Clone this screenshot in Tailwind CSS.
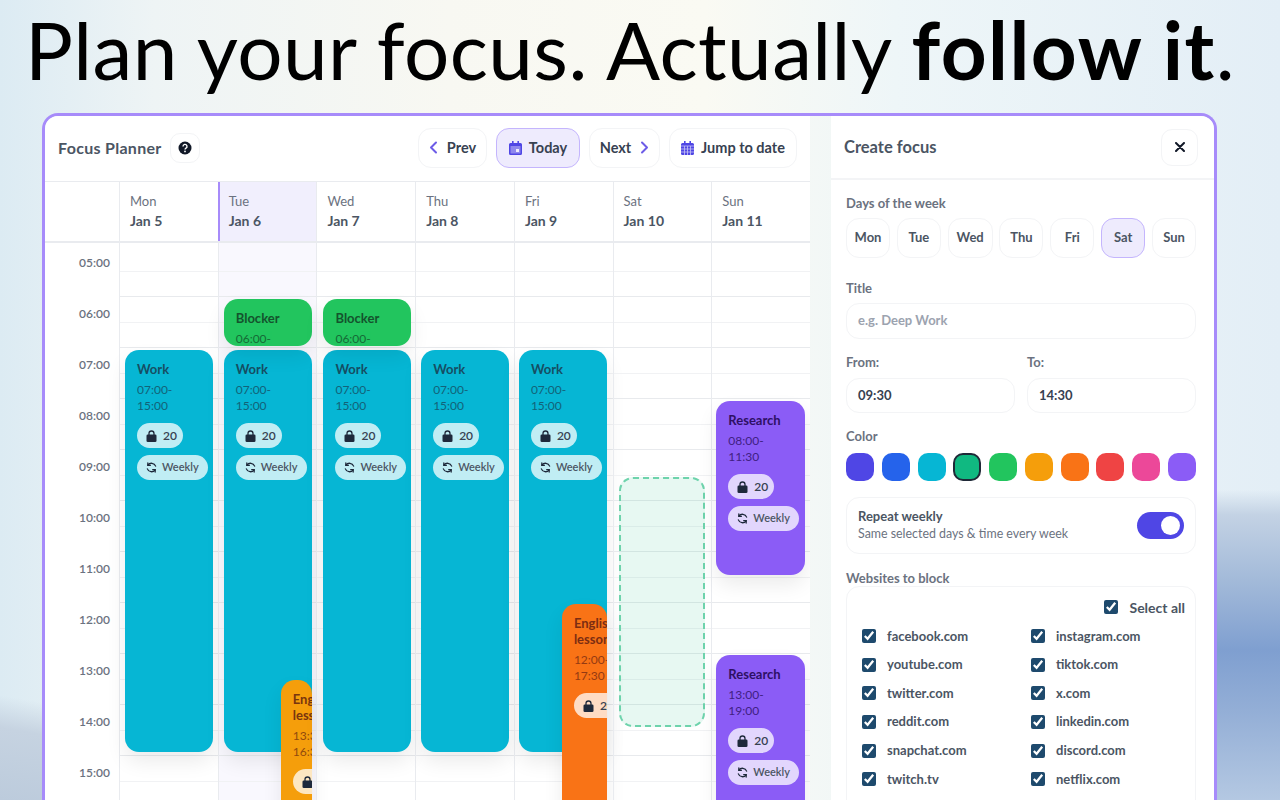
<!DOCTYPE html>
<html lang="en">
<head>
<meta charset="UTF-8" />
<title>Focus Planner</title>
<script src="https://cdn.jsdelivr.net/npm/@tailwindcss/browser@4"></script>
</head>
<body class="relative w-[1280px] h-[800px] overflow-hidden font-['Lato',sans-serif] text-[#1f2937] bg-no-repeat bg-[size:63px_100%,42px_100%,100%_100%] bg-[position:right_top,left_top,left_top] bg-[image:linear-gradient(180deg,transparent_490px,#c3d2e4_515px,#a3bad9_580px,#7f9fd0_650px,#93aed6_710px,#b4c8e2_800px),linear-gradient(190deg,transparent_87%,#c6d3e1_91%,#bccbdc_100%),linear-gradient(90deg,#dcebf3_0%,#eef4f5_12%,#f8f8f2_35%,#fafaf3_55%,#eef6f8_70%,#e3eef6_100%)]">

  <h1 class="h-[113px] pt-[3px] pl-[25px] whitespace-nowrap text-[80px] leading-[92px] text-black font-['Lato',sans-serif] font-normal tracking-[0.42px]">Plan your focus. Actually <b class="font-bold tracking-[1.5px]">follow it</b>.</h1>

  <div class="ml-[42px] w-[1175px] h-[720px] border-[3px] border-b-0 border-[#a78bfa] rounded-t-[16px] flex">

    <!-- calendario -->
    <section class="w-[765px] bg-white rounded-tl-[13px] shrink-0 flex flex-col">
      <header class="h-[65px] flex items-center justify-between pl-[13px] pr-[13px] pb-[2px]">
        <div class="flex items-center gap-2">
          <span class="text-[16px] font-bold text-[#4b5563] tracking-[0.3px]">Focus Planner</span>
          <span class="w-[30px] h-[30px] rounded-[10px] border border-gray-100 flex items-center justify-center">
            <svg width="14" height="14" viewBox="0 0 14 14"><circle cx="7" cy="7" r="6.5" fill="#111827"/><path d="M5 5.4a2 2 0 1 1 3 1.700c-.7.4-1 .7-1 1.400" fill="none" stroke="#fff" stroke-width="1.400"/><circle cx="7" cy="10.400" r=".9" fill="#fff"/></svg>
          </span>
        </div>
        <div class="flex items-center gap-[9px] text-[14.5px] font-bold text-[#374151]">
          <button class="h-[40px] w-[69px] rounded-[13px] border border-gray-100 flex items-center justify-center gap-[9px]">
            <svg width="9" height="13" viewBox="0 0 9 13" fill="none" stroke="#6d5ce7" stroke-width="2" stroke-linecap="round" stroke-linejoin="round"><path d="M7 1.500 2 6.500l5 5"/></svg>Prev
          </button>
          <button class="h-[40px] w-[84px] rounded-[13px] border border-[#c4b5fd] bg-[#eeebfd] flex items-center justify-center gap-[7px]">
            <svg width="13" height="14" viewBox="0 0 13 14"><path d="M3 0h1.600v2h3.800V0H10v2h1.500A1.500 1.500 0 0 1 13 3.500v9a1.500 1.500 0 0 1-1.500 1.500h-10A1.500 1.500 0 0 1 0 12.500v-9A1.500 1.500 0 0 1 1.500 2H3z" fill="#4f46e5"/><rect x="1.500" y="5" width="10" height="7.500" rx=".5" fill="#8f88ee"/><rect x="7" y="8" width="3" height="3" fill="#eeebfd"/></svg>Today
          </button>
          <button class="h-[40px] w-[71px] rounded-[13px] border border-gray-100 flex items-center justify-center gap-[9px]">
            Next<svg width="9" height="13" viewBox="0 0 9 13" fill="none" stroke="#6d5ce7" stroke-width="2" stroke-linecap="round" stroke-linejoin="round"><path d="m2 1.500 5 5-5 5"/></svg>
          </button>
          <button class="h-[40px] w-[128px] rounded-[13px] border border-gray-100 flex items-center justify-center gap-[7px]">
            <svg width="13" height="14" viewBox="0 0 13 14"><path d="M3 0h1.600v2h3.800V0H10v2h1.500A1.500 1.500 0 0 1 13 3.500v9a1.500 1.500 0 0 1-1.500 1.500h-10A1.500 1.500 0 0 1 0 12.500v-9A1.500 1.500 0 0 1 1.500 2H3z" fill="#4f46e5"/><path d="M0 5h13M0 8h13M0 11h13M3.500 5v9M6.500 5v9M9.500 5v9" stroke="#c7c3f5" stroke-width=".8"/></svg>Jump to date
          </button>
        </div>
      </header>

      <!-- cabecera de dias -->
      <div class="h-[62px] flex border-t border-b-2 border-[#e9ebef] shrink-0">
        <div class="w-[74px] shrink-0"></div>
        <div class="flex-1 border-l border-[#e9ebef] pl-[10px] pt-[9px] text-[13px] leading-[20px]"><div class="text-[#6b7280]">Mon</div><div class="text-[14px] font-bold text-[#4b5563]">Jan 5</div></div>
        <div class="flex-1 border-l-2 border-[#a78bfa] bg-[#f1effd] pl-[9px] pt-[9px] text-[13px] leading-[20px]"><div class="text-[#6b7280]">Tue</div><div class="text-[14px] font-bold text-[#4b5563]">Jan 6</div></div>
        <div class="flex-1 border-l border-[#e9ebef] pl-[10px] pt-[9px] text-[13px] leading-[20px]"><div class="text-[#6b7280]">Wed</div><div class="text-[14px] font-bold text-[#4b5563]">Jan 7</div></div>
        <div class="flex-1 border-l border-[#e9ebef] pl-[10px] pt-[9px] text-[13px] leading-[20px]"><div class="text-[#6b7280]">Thu</div><div class="text-[14px] font-bold text-[#4b5563]">Jan 8</div></div>
        <div class="flex-1 border-l border-[#e9ebef] pl-[10px] pt-[9px] text-[13px] leading-[20px]"><div class="text-[#6b7280]">Fri</div><div class="text-[14px] font-bold text-[#4b5563]">Jan 9</div></div>
        <div class="flex-1 border-l border-[#e9ebef] pl-[10px] pt-[9px] text-[13px] leading-[20px]"><div class="text-[#6b7280]">Sat</div><div class="text-[14px] font-bold text-[#4b5563]">Jan 10</div></div>
        <div class="flex-1 border-l border-[#e9ebef] pl-[10px] pt-[9px] text-[13px] leading-[20px]"><div class="text-[#6b7280]">Sun</div><div class="text-[14px] font-bold text-[#4b5563]">Jan 11</div></div>
      </div>

      <!-- rejilla -->
      <div id="grid" class="flex-1 flex overflow-hidden"></div>
    </section>

    <div class="w-[21px] shrink-0"></div>

    <!-- panel derecho -->
    <aside class="flex-1 min-w-0 bg-white rounded-tr-[13px] flex flex-col">
      <header class="h-[64px] flex items-center justify-between pl-[13px] pr-[16px] border-b-2 border-[#f3f4f6]">
        <span class="text-[16.500px] font-bold text-[#4b5563]">Create focus</span>
        <span class="w-[37px] h-[37px] rounded-[11px] border border-gray-100 flex items-center justify-center">
          <svg width="10" height="10" viewBox="0 0 10 10" stroke="#111827" stroke-width="2" stroke-linecap="round"><path d="m1 1 8 8M9 1 1 9"/></svg>
        </span>
      </header>

      <div class="pl-[15px] pr-[18px] text-[13px] font-bold text-[#6b7280]">
        <div class="mt-[14px] leading-[18px]">Days of the week</div>
        <div class="mt-[6px] flex justify-between text-[13px] text-[#4b5563]">
          <span class="w-[44px] h-[40px] rounded-[13px] border border-gray-100 flex items-center justify-center">Mon</span>
          <span class="w-[44px] h-[40px] rounded-[13px] border border-gray-100 flex items-center justify-center">Tue</span>
          <span class="w-[45px] h-[40px] rounded-[13px] border border-gray-100 flex items-center justify-center">Wed</span>
          <span class="w-[44px] h-[40px] rounded-[13px] border border-gray-100 flex items-center justify-center">Thu</span>
          <span class="w-[44px] h-[40px] rounded-[13px] border border-gray-100 flex items-center justify-center">Fri</span>
          <span class="w-[44px] h-[40px] rounded-[13px] border border-[#c4b5fd] bg-[#eeebfd] flex items-center justify-center">Sat</span>
          <span class="w-[44px] h-[40px] rounded-[13px] border border-gray-100 flex items-center justify-center">Sun</span>
        </div>

        <div class="mt-[21px] leading-[18px]">Title</div>
        <div class="mt-[6px] h-[36px] rounded-[13px] border border-gray-100 flex items-center pl-[11px] text-[#9ca3af] font-bold">e.g. Deep Work</div>

        <div class="mt-[14px] flex gap-[12px] leading-[18px]"><span class="flex-1">From:</span><span class="flex-1">To:</span></div>
        <div class="mt-[7px] flex gap-[12px] text-[#374151]">
          <div class="flex-1 h-[35px] rounded-[13px] border border-gray-100 flex items-center pl-[11px]">09:30</div>
          <div class="flex-1 h-[35px] rounded-[13px] border border-gray-100 flex items-center pl-[11px]">14:30</div>
        </div>

        <div class="mt-[14px] leading-[18px]">Color</div>
        <div class="mt-[8px] flex justify-between">
          <span class="w-[28px] h-[28px] rounded-[10px] bg-[#4f46e5]"></span>
          <span class="w-[28px] h-[28px] rounded-[10px] bg-[#2563eb]"></span>
          <span class="w-[28px] h-[28px] rounded-[10px] bg-[#06b6d4]"></span>
          <span class="w-[28px] h-[28px] rounded-[10px] bg-[#10b981] border-2 border-[#1f2937]"></span>
          <span class="w-[28px] h-[28px] rounded-[10px] bg-[#22c55e]"></span>
          <span class="w-[28px] h-[28px] rounded-[10px] bg-[#f59e0b]"></span>
          <span class="w-[28px] h-[28px] rounded-[10px] bg-[#f97316]"></span>
          <span class="w-[28px] h-[28px] rounded-[10px] bg-[#ef4444]"></span>
          <span class="w-[28px] h-[28px] rounded-[10px] bg-[#ec4899]"></span>
          <span class="w-[28px] h-[28px] rounded-[10px] bg-[#8b5cf6]"></span>
        </div>

        <div class="mt-[16px] h-[57px] rounded-[13px] border border-gray-100 flex items-center justify-between pl-[11px] pr-[11px]">
          <div class="-mt-[3px]">
            <div class="text-[13px] leading-[18px] text-[#4b5563]">Repeat weekly</div>
            <div class="mt-[1px] text-[12.400px] leading-[16px] font-normal text-[#6b7280]">Same selected days &amp; time every week</div>
          </div>
          <span class="w-[47px] h-[27px] rounded-full bg-[#4f46e5] flex items-center justify-end pr-[4px]"><span class="w-[19px] h-[19px] rounded-full bg-white"></span></span>
        </div>

        <div class="mt-[15px] leading-[18px]">Websites to block</div>
        <div class="h-[230px] rounded-t-[13px] border border-gray-100 pl-[15px] pr-[10px] pt-[11px] -mt-[1px]">
          <div class="flex justify-end items-center gap-[11px] h-[18px]">
            <input type="checkbox" checked class="w-[14px] h-[14px] accent-[#1e4a6d]" />
            <span class="text-[14px] text-[#4b5563]">Select all</span>
          </div>
          <div id="sites" class="mt-[6px] grid grid-cols-[169px_1fr] auto-rows-[28.600px] text-[13px] text-[#4b5563]"></div>
        </div>
      </div>
    </aside>
  </div>

  <script>
    const sites = ["facebook.com","instagram.com","youtube.com","tiktok.com","twitter.com","x.com","reddit.com","linkedin.com","snapchat.com","discord.com","twitch.tv","netflix.com"];
    document.getElementById("sites").innerHTML = sites.map(s => `
      <label class="flex items-center gap-[11px]"><input type="checkbox" checked class="w-[14px] h-[14px] accent-[#1e4a6d]" /><span>${s}</span></label>`).join("");

    const lock = `<svg width="11" height="12" viewBox="0 0 11 12"><path d="M3 5V3.500a2.500 2.500 0 0 1 5 0V5" fill="none" stroke="#1e293b" stroke-width="1.300"/><rect x="0.500" y="4.500" width="10" height="7.500" rx="1.300" fill="#1e293b"/></svg>`;
    const sync = `<svg width="11" height="11" viewBox="0 0 12 12" fill="none" stroke="#1e293b" stroke-width="1.400" stroke-linecap="round"><path d="M10.500 4.500A4.800 4.800 0 0 0 2 3.500M1.500 7.500A4.800 4.800 0 0 0 10 8.500"/><path d="M2 1v2.700h2.700M10 11V8.300H7.300"/></svg>`;

    const ev = (cls, txt, left, top, w, h, title, time, pills) => `
      <div class="absolute ${cls} rounded-[14px] overflow-hidden shadow-[0_10px_20px_rgba(0,0,0,0.08)] pl-[12px] pt-[11px]" style="left:${left}px;top:${top}px;width:${w}px;height:${h}px">
        <div class="w-[76px] text-[13px] leading-[16px] font-bold ${txt}">${title}</div>
        <div class="w-[50px] mt-[5px] text-[12px] leading-[16px] ${txt} opacity-80">${time}</div>
        ${pills > 0 ? `<div class="mt-[9px] h-[25px] w-[46px] rounded-full bg-white/75 flex items-center gap-[6px] pl-[9px] text-[12px] font-semibold text-[#374151]">${lock}<span>20</span></div>` : ""}
        ${pills > 1 ? `<div class="mt-[7px] h-[25px] w-[71px] rounded-full bg-white/75 flex items-center gap-[5px] pl-[9px] text-[11px] font-semibold text-[#4b5563]">${sync}<span>Weekly</span></div>` : ""}
      </div>`;

    // eventos por columna: offsets relativos a la rejilla (y=0 es 243px en pantalla)
    const Y = 243, COLS = 7;
    const cyan = ["bg-[#06b6d4]", "text-[#164e63]"];
    const green = ["bg-[#22c55e]", "text-[#14532d]"];
    const violet = ["bg-[#8b5cf6]", "text-[#2e1065]"];
    const amber = ["bg-[#f59e0b]", "text-[#78350f]"];
    const orange = ["bg-[#f97316]", "text-[#7c2d12]"];
    const columnas = [
      ev(...cyan, 5, 350-Y, 88, 402, "Work", "07:00-15:00", 2),
      ev(...cyan, 5, 350-Y, 88, 402, "Work", "07:00-15:00", 2) + ev(...green, 5, 299-Y, 88, 47, "Blocker", "06:00-07:00", 0) + ev(...amber, 62, 680-Y, 31, 180, "English lesson", "13:30-16:30", 1),
      ev(...cyan, 6, 350-Y, 88, 402, "Work", "07:00-15:00", 2) + ev(...green, 6, 299-Y, 88, 47, "Blocker", "06:00-07:00", 0),
      ev(...cyan, 5, 350-Y, 88, 402, "Work", "07:00-15:00", 2),
      ev(...cyan, 4, 350-Y, 88, 402, "Work", "07:00-15:00", 2) + ev(...orange, 47, 604-Y, 45, 260, "English lesson", "12:00-17:30", 1),
      `<div class="absolute left-[5px] w-[86px] top-[234px] h-[250px] rounded-[14px] bg-[#10b981]/10 border-2 border-dashed border-[#6ed3ac]"></div>`,
      ev(...violet, 4, 401-Y, 89, 174, "Research", "08:00-11:30", 2) + ev(...violet, 4, 655-Y, 89, 260, "Research", "13:00-19:00", 2),
    ];

    let lineas = `<div class="h-[3px]"></div>`;
    for (let h = 5; h <= 15; h++) {
      lineas += `<div class="h-[25.500px] border-b border-[#f1f2f4]"></div><div class="h-[25.500px] border-b border-[#e8eaed]"></div>`;
    }
    const horas = Array.from({length: 11}, (_, i) => `<div class="h-[51px] flex items-start justify-end pr-[9px] pt-[13px] text-[12px] leading-[14px] font-semibold text-[#6b7280]">${String(i + 5).padStart(2, "0")}:00</div>`).join("");

    let html = `<div class="w-[74px] shrink-0">${horas}</div>`;
    for (let c = 0; c < COLS; c++) {
      const hoy = c === 1 ? "bg-[#f9f8fe]" : "";
      html += `<div class="flex-1 relative border-l border-[#e9ebef] ${hoy}">${lineas}${columnas[c]}</div>`;
    }
    document.getElementById("grid").innerHTML = html;
  </script>
</body>
</html>
